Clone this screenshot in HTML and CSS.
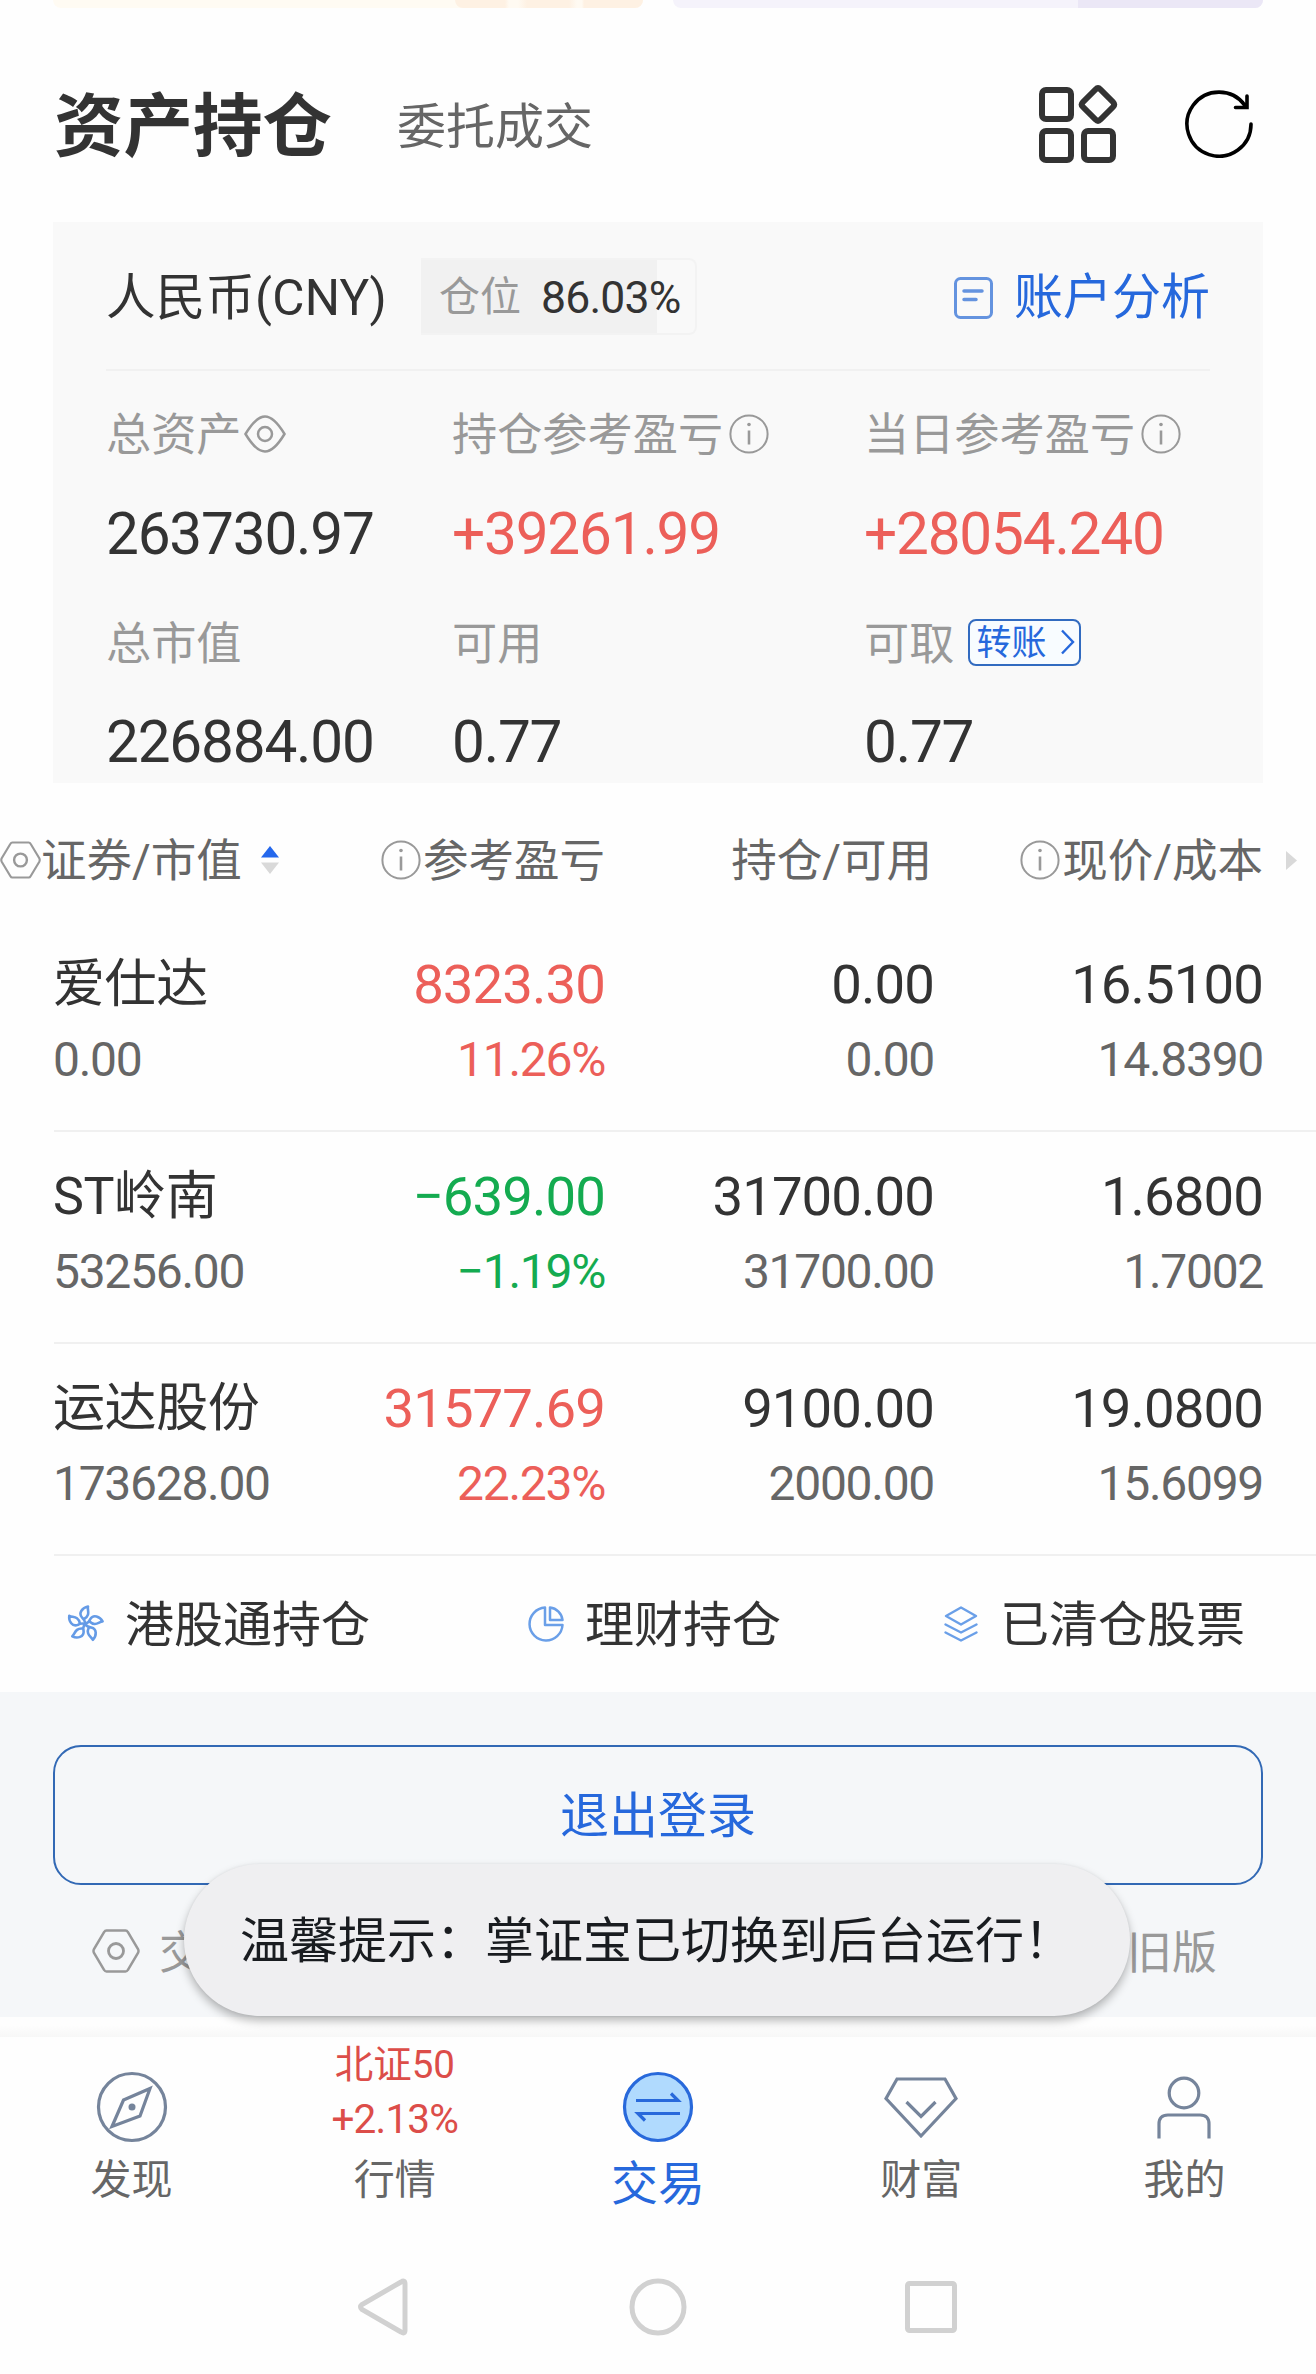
FILE: index.html
```html
<!DOCTYPE html>
<html lang="zh-CN">
<head>
<meta charset="utf-8">
<title>资产持仓</title>
<link rel="stylesheet" href="styles.css">
</head>
<body>
<svg width="0" height="0" class="defs">
  <symbol id="info" viewBox="0 0 40 40"><circle cx="20" cy="20" r="18.6" fill="none" stroke="#999" stroke-width="2"/><circle cx="20" cy="10.5" r="1.8" fill="#999"/><path d="M20 16.5V30.5" stroke="#999" stroke-width="2.6"/></symbol>
  <symbol id="hex" viewBox="0 0 48 44"><path d="M14.5 1.5H33.5Q35 1.500 35.800 3L46 20Q47 22 46 24L35.800 41Q35 42.500 33.500 42.500H14.500Q13 42.500 12.200 41L2 24Q1 22 2 20L12.200 3Q13 1.500 14.500 1.500Z" fill="none" stroke="#999" stroke-width="2.500"/><circle cx="24" cy="22" r="7.500" fill="none" stroke="#999" stroke-width="2.800"/></symbol>
</svg>
<main class="page">
  <div class="banners"><div class="banner warm"><i></i></div><div class="banner cool"><i></i></div></div>

  <header class="top">
    <h1>资产持仓</h1>
    <span class="other-tab">委托成交</span>
    <svg class="apps" width="80" height="80" viewBox="0 0 80 80" fill="none" stroke="#333" stroke-width="6">
      <rect x="4" y="5" width="29" height="29" rx="4"/><rect x="4" y="46" width="29" height="29" rx="4"/><rect x="46" y="46" width="29" height="29" rx="4"/>
      <path d="M57.500 4.500Q60 2 62.500 4.500L75 17Q77.500 19.500 75 22L62.500 34.500Q60 37 57.500 34.500L45 22Q42.500 19.500 45 17Z"/>
    </svg>
    <svg class="refresh" width="68" height="68" viewBox="0 0 68 68" fill="none" stroke="#000" stroke-width="3.600" stroke-linecap="round">
      <path d="M66 34A32 32 0 1 1 60 15.500M62 6V17.500H50.500"/>
    </svg>
  </header>

  <section class="card">
    <div class="card-head">
      <span class="currency">人民币(CNY)</span>
      <span class="ratio"><span>仓位</span><b>86.03%</b></span>
      <span class="analysis">
        <svg width="40" height="42" viewBox="0 0 40 42" fill="none" stroke="#6493df" stroke-width="3"><rect x="1.500" y="1.500" width="36" height="39" rx="5"/><path d="M10 14H28M10 22.500H22" stroke-width="3.500" stroke-linecap="round"/></svg>
        <span>账户分析</span></span>
    </div>
    <div class="stats">
      <div class="label">总资产<svg class="eye" width="42" height="38" viewBox="0 0 42 38" fill="none" stroke="#999" stroke-width="2.500"><path d="M1.500 19Q12 1.500 21 1.500T40.500 19Q30 36.500 21 36.500T1.500 19Z"/><circle cx="21" cy="19" r="7"/></svg></div>
      <div class="label">持仓参考盈亏<svg class="tip" width="40" height="40"><use href="#info"/></svg></div>
      <div class="label">当日参考盈亏<svg class="tip" width="40" height="40"><use href="#info"/></svg></div>
      <div class="value">263730.97</div><div class="value up">+39261.99</div><div class="value up">+28054.240</div>
      <div class="label">总市值</div><div class="label">可用</div>
      <div class="label">可取<span class="transfer">转账<svg width="14" height="26" viewBox="0 0 14 26" fill="none" stroke="#2668dc" stroke-width="2.400"><path d="M1 1.500L12 13L1 24.500"/></svg></span></div>
      <div class="value">226884.00</div><div class="value">0.77</div><div class="value">0.77</div>
    </div>
  </section>

  <section class="table">
    <div class="thead">
      <div class="first"><svg width="41" height="38"><use href="#hex"/></svg><span>证券/市值</span><svg class="sort" width="18" height="28" viewBox="0 0 18 28"><path d="M9 0L18 11.500H0Z" fill="#2468ec"/><path d="M0 16.500H18L9 28Z" fill="#d9d9d9"/></svg></div>
      <div><svg width="40" height="40"><use href="#info"/></svg><span>参考盈亏</span></div>
      <div><span>持仓/可用</span></div>
      <div><svg width="40" height="40"><use href="#info"/></svg><span>现价/成本</span></div>
      <svg class="more" width="11" height="19" viewBox="0 0 11 19"><path d="M0 0L11 9.500L0 19Z" fill="#d9d9d9"/></svg>
    </div>
    <div class="row"><strong>爱仕达</strong><strong class="up">8323.30</strong><strong>0.00</strong><strong>16.5100</strong><span>0.00</span><span class="up">11.26%</span><span>0.00</span><span>14.8390</span></div>
    <div class="row"><strong>ST岭南</strong><strong class="down">−639.00</strong><strong>31700.00</strong><strong>1.6800</strong><span>53256.00</span><span class="down">−1.19%</span><span>31700.00</span><span>1.7002</span></div>
    <div class="row"><strong>运达股份</strong><strong class="up">31577.69</strong><strong>9100.00</strong><strong>19.0800</strong><span>173628.00</span><span class="up">22.23%</span><span>2000.00</span><span>15.6099</span></div>
  </section>

  <nav class="quick">
    <div><svg width="38" height="38" viewBox="-19 -19 38 38" fill="none" stroke="#659be6" stroke-width="2.600" stroke-linejoin="round">
      <g id="petal"><path d="M0 0C0 -3 -1 -5 -3 -6.500C-7 -11 -2.500 -16.500 3 -17.500C2 -14 6 -9 -1 -5"/></g>
      <use href="#petal" transform="rotate(72)"/><use href="#petal" transform="rotate(144)"/><use href="#petal" transform="rotate(216)"/><use href="#petal" transform="rotate(288)"/>
    </svg><span>港股通持仓</span></div>
    <div><svg width="36" height="36" viewBox="0 0 36 36" fill="none" stroke="#6a9fe8" stroke-width="2.500" stroke-linejoin="round"><path d="M17 1.500A16.500 16.500 0 1 0 34.500 19H17Z"/><path d="M22 1.500V14H34.500A14 14 0 0 0 22 1.500Z"/></svg><span>理财持仓</span></div>
    <div><svg width="34" height="36" viewBox="0 0 34 36" fill="none" stroke="#6a9fe8" stroke-width="2.400" stroke-linejoin="round" stroke-linecap="round"><path d="M17 1.500L32 10L17 18.500L2 10ZM1.500 18.500L17 26.500L32.500 18.500M1.500 26.500L17 34.500L32.500 26.500"/></svg><span>已清仓股票</span></div>
  </nav>

  <section class="account">
    <div class="logout">退出登录</div>
    <div class="links"><div><svg width="48" height="44"><use href="#hex"/></svg><span>交</span></div><span>旧版</span></div>
    <div class="toast">温馨提示：掌证宝已切换到后台运行！</div>
  </section>

  <div class="fade"></div>
  <nav class="tabs">
    <div><svg width="72" height="72" viewBox="0 0 72 72" fill="none" stroke="#75849b" stroke-width="3.200"><circle cx="36" cy="36" r="33.500"/><path d="M54 17.500L44 45L16 55.500L27.500 29Z"/><circle cx="36" cy="36" r="3.500" fill="#75849b" stroke="none"/></svg><span>发现</span></div>
    <div><p>北证50</p><p class="change">+2.13%</p><span>行情</span></div>
    <div class="active"><svg width="72" height="72" viewBox="0 0 72 72" fill="none" stroke="#2869db" stroke-width="3.200"><circle cx="36" cy="36" r="33.500" fill="#b0dafe"/><path d="M14 29.500H56L49 22.500M58 42.500H16L23 49.500"/></svg><span>交易</span></div>
    <div><svg width="76" height="72" viewBox="0 0 76 72" fill="none" stroke="#75849b" stroke-width="3.200"><path d="M14 8H62L73 27.500L38 65L3 27.500ZM23.500 31L38 45.500L52.500 31"/></svg><span>财富</span></div>
    <div><svg width="56" height="72" viewBox="0 0 56 72" fill="none" stroke="#75849b" stroke-width="3.200"><circle cx="28" cy="22" r="14.800"/><path d="M3 67.500V53Q3 44 12 44H44Q53 44 53 53V67.500"/></svg><span>我的</span></div>
  </nav>
  <div class="system">
    <svg width="50" height="58" viewBox="0 0 50 58"><path d="M43 4Q47 1.500 47 6V52Q47 56.500 43 54L4 31.500Q1 29 4 26.500Z"/></svg>
    <svg width="58" height="58" viewBox="0 0 58 58"><circle cx="29" cy="29" r="26"/></svg>
    <svg width="52" height="52" viewBox="0 0 52 52"><rect x="2.500" y="2.500" width="47" height="47" rx="2"/></svg>
  </div>
</main>
</body>
</html>
```
FILE: styles.css
```css
* { box-sizing: border-box; }
body { margin: 0; background: #fefefe; color: #333; font-family: Roboto, "Noto Sans CJK SC", sans-serif; line-height: 1.2; }
svg { display: block; flex: none; }
.defs { position: absolute; }
.page { width: 1316px; height: 2374px; overflow: hidden; display: flex; flex-direction: column; white-space: nowrap; }
.page > * { flex: none; }
.up { color: #ec5f59 !important; }
.down { color: #14ab50 !important; }

.banners { display: flex; height: 8px; padding: 0 53px; gap: 30px; }
.banner { flex: 1; display: flex; justify-content: flex-end; border-radius: 0 0 14px 14px; overflow: hidden; }
.warm { background: #fffbf3; }
.warm i { width: 188px; background: linear-gradient(90deg, #fef1e3 50px, #fffaf2 54px, #fffaf2 63px, #fef1e3 72px, #fef1e3 114px, #fffaf2 122px, #fffaf2 127px, #fef1e3 129px); border-radius: 0 0 0 10px; }
.cool { background: #f5f3fb; }
.cool i { width: 185px; background: #ebe7f6; }

.top { height: 214px; padding: 20px 63px 0 54px; display: flex; align-items: center; }
h1 { margin: 0; padding-top: 6px; font-size: 69.500px; line-height: 80px; font-weight: 700; }
.other-tab { padding-top: 5px; margin-left: 65px; font-size: 49px; line-height: 60px; color: #666; }
.apps { margin-left: auto; }
.refresh { margin-left: 67px; margin-top: -2px; }

.card { margin: 0 53px; height: 561px; padding: 0 53px; background: #f9f9f9; }
.card-head { height: 149px; padding-top: 1px; border-bottom: 2px solid #f1f1f1; display: flex; align-items: center; }
.currency { width: 315px; padding-top: 5px; font-size: 49.500px; letter-spacing: .2px; }
.ratio { width: 276px; height: 77px; display: flex; align-items: center; gap: 20px; padding-left: 18px; border: 2px solid #f3f3f3; border-left: 0; border-radius: 0 8px 8px 0; background: linear-gradient(90deg, #f1f1f1 236px, #f9f9f9 236px); font-size: 41px; color: #999; }
.ratio span { padding-top: 4px; }
.ratio b { padding-top: 5px; font-size: 44.500px; font-weight: 400; color: #333; letter-spacing: -.8px; }
.analysis { margin-left: auto; display: flex; align-items: center; gap: 20px; font-size: 49px; color: #2668dc; }
.analysis svg { margin-top: 4px; }
.analysis span { padding-top: 5px; }
.stats { display: grid; grid-template-columns: 346px 412px 1fr; grid-template-rows: 127px 69px 152px 43px; align-items: center; }
.label { display: flex; align-items: center; padding-top: 3px; font-size: 45.200px; line-height: 50px; color: #999; }
.label svg, .label .transfer { margin-top: -4px; }
.value { padding-top: 3px; font-size: 58.500px; line-height: 43px; letter-spacing: -1.200px; }
.eye { margin-left: 2px; }
.tip { margin-left: 6px; }
.transfer { display: flex; align-items: center; gap: 15px; width: 113px; height: 47px; margin-left: 14px; padding: 2px 0 0 6px; border: 2px solid #326bc0; border-radius: 8px; font-size: 35px; color: #2668dc; background: #f8fcff; }
.label .transfer svg { margin-top: -3px; }

.thead { display: grid; grid-template-columns: 281px 324px 327px 331px 1fr; height: 137px; padding-top: 17px; align-items: center; font-size: 45.500px; color: #666; }
.thead div { display: flex; align-items: center; justify-content: flex-end; gap: 2px; }
.thead div span { padding-top: 4px; }
.thead .first { justify-content: flex-start; padding: 0 2px 0 0; gap: 0; }
.thead .sort { margin-left: auto; }
.thead .more { margin-left: 23px; }
.row { display: grid; grid-template-columns: 221px 330px 328px 330px; grid-template-rows: 75px 76px; align-items: center; height: 212px; padding-top: 27px; margin-left: 54px; border-bottom: 2px solid #f0f0f0; text-align: right; }
.row strong { font-size: 54.500px; font-weight: 400; letter-spacing: -.9px; }
.row strong:first-child { margin-left: -1px; padding-top: 2px; font-size: 52px; letter-spacing: -.4px; }
.row span { font-size: 48px; color: #666; letter-spacing: -1.300px; }
.row > :nth-child(4n + 1) { text-align: left; }
.row > span:nth-child(4n + 1) { margin-left: -1px; }
.row > :nth-child(4n + 3) { margin-right: -1px; }

.quick { height: 136px; display: flex; justify-content: space-between; padding: 0 71px 0 66px; font-size: 49px; }
.quick div { display: flex; align-items: center; gap: 21px; }
.quick span { padding-top: 4px; }
.quick svg { margin-top: -1px; }
.quick div:nth-child(2) { margin-right: 5px; }
.quick div:nth-child(3) { gap: 22px; }

.account { position: relative; height: 325px; padding: 53px 53px 0; background: #f5f7f9; }
.logout { height: 140px; padding-top: 4px; display: flex; align-items: center; justify-content: center; border: 2px solid #3269b5; border-radius: 28px; font-size: 49px; color: #2668dc; }
.links { height: 132px; padding: 0 46px 0 39px; display: flex; justify-content: space-between; align-items: center; font-size: 45px; color: #999; }
.links div { display: flex; align-items: center; gap: 19px; }
.links span { padding-top: 5px; }
.toast { position: absolute; left: 184px; top: 172px; width: 946px; height: 152px; padding: 5px 0 0 56px; border-radius: 76px; background: #efeff1; box-shadow: 0 5px 10px rgba(0, 0, 0, .28), 0 0 3px rgba(0, 0, 0, .06); display: flex; align-items: center; font-size: 49px; color: #191c20; z-index: 1; }
.fade { height: 20px; background: linear-gradient(#fefefe 40%, #f7f7f7); }

.tabs { height: 193px; display: grid; grid-template-columns: repeat(5, 1fr); }
.tabs div { display: flex; flex-direction: column; align-items: center; padding-top: 34px; font-size: 41px; line-height: 50px; color: #666; }
.tabs svg { margin-bottom: 12px; }
.tabs .active { font-size: 47px; line-height: 58px; color: #2668dc; }
.tabs div:nth-child(2) { padding-top: 1px; }
.tabs p { margin: 0; font-size: 38.500px; line-height: 54px; color: #dc4d49; }
.tabs .change { font-size: 40.500px; letter-spacing: -.8px; margin-bottom: 9px; }
.system { height: 144px; display: flex; align-items: center; padding: 10px 0 0 358px; }
.system svg { fill: none; stroke: #d1d1d1; stroke-width: 5; margin-right: 221px; }
.system svg:nth-child(2) { margin-right: 218px; }
```
